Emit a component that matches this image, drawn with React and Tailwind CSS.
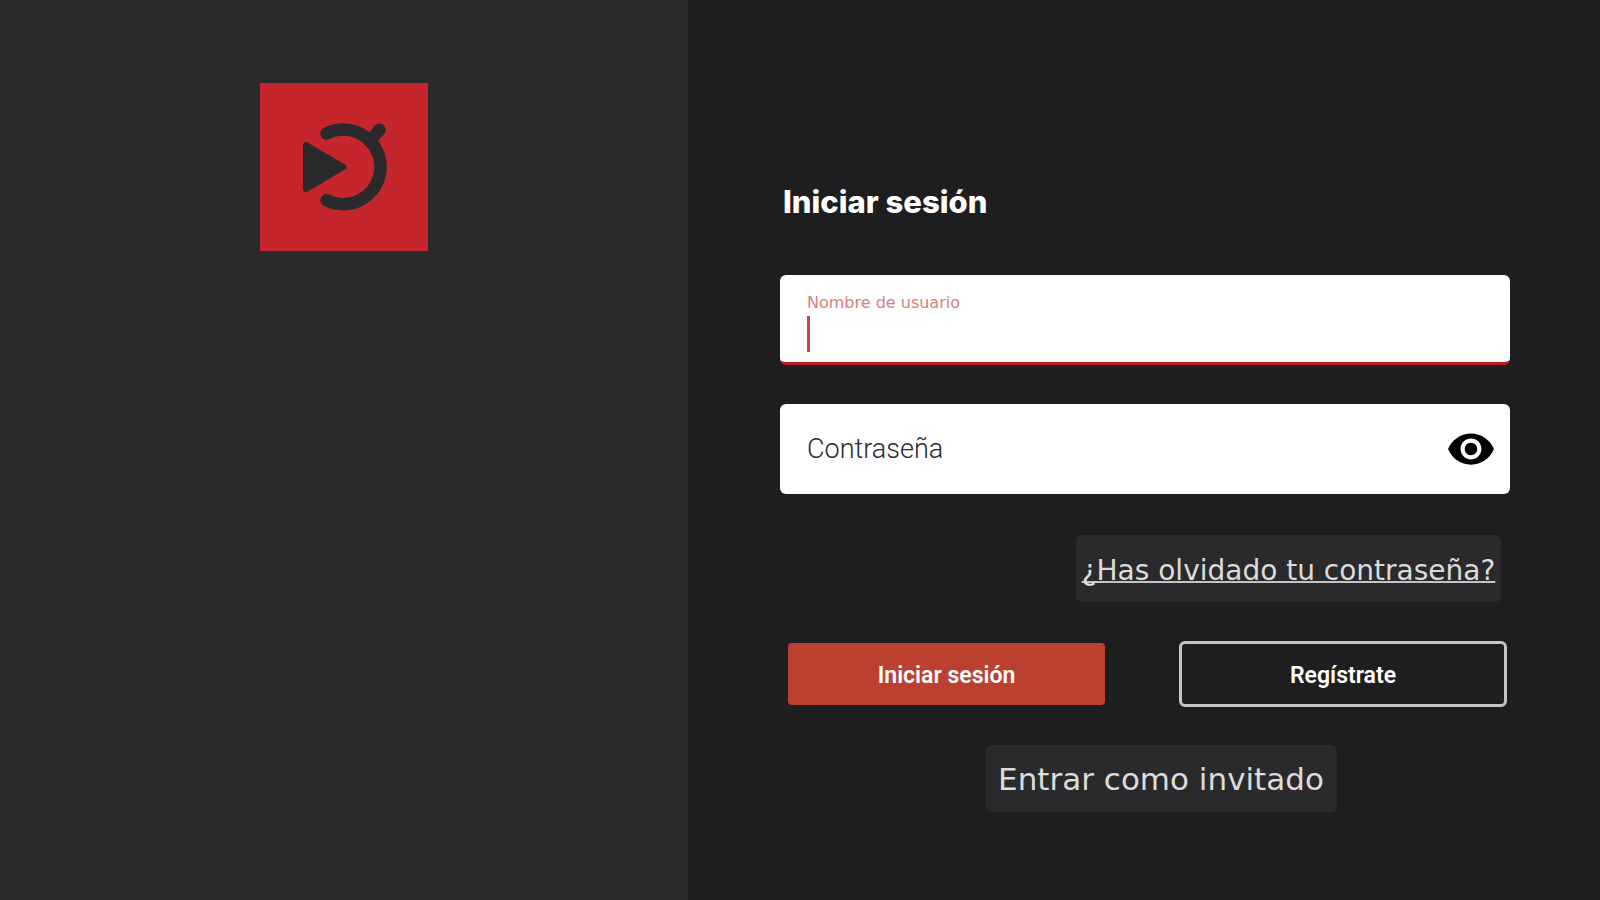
import { MdVisibility } from "react-icons/md";

function Logo() {
  return (
    <svg viewBox="0 0 168 168" className="size-42 bg-[#c5262b]" role="img" aria-label="Logo">
      <g fill="none" stroke="#2a2a2c" strokeWidth="12.5" strokeLinecap="round" strokeLinejoin="round">
        <path d="M66.5 50.5 A37.3 37.3 0 1 1 66.5 117.2" />
        <path d="M119.5 46.8 L110 58" />
      </g>
      <path
        d="M46 62 V106 L83.5 84 Z"
        fill="#2a2a2c"
        stroke="#2a2a2c"
        strokeWidth="6"
        strokeLinejoin="round"
      />
    </svg>
  );
}

export default function App() {
  return (
    <main className="grid min-h-screen grid-cols-[43fr_57fr] bg-[#1e1e20] font-['Roboto',sans-serif] text-white">
      <aside className="flex justify-center bg-[#2a2a2c] pt-[83px]">
        <Logo />
      </aside>

      <form className="flex flex-col pt-[184px] pr-[90px] pl-[92px]" onSubmit={(e) => e.preventDefault()}>
        <h1 className="pl-[3px] font-['Inter',sans-serif] text-[31px] leading-9 font-extrabold">Iniciar sesión</h1>

        <div className="relative mt-[55px] flex h-[90px] flex-col overflow-hidden rounded-md border-b-3 border-[#c01a1e] bg-white px-[27px] pt-[18px]">
          <label htmlFor="user" className="font-['DejaVu_Sans',sans-serif] text-[16px] leading-5 text-[#d77f7f]">
            Nombre de usuario
          </label>
          <input
            id="user"
            type="text"
            autoComplete="off"
            className="mt-1 h-9 w-full text-[27px] text-[#333] caret-transparent outline-none"
          />
          <span aria-hidden="true" className="absolute top-[41px] left-[27px] h-9 w-[3px] bg-[#c5484a]" />
        </div>

        <div className="mt-[39px] flex h-[90px] items-center rounded-md bg-white pr-[14px] pl-[27px]">
          <label htmlFor="password" className="text-[27px] font-light text-[#2a2a2a]">
            Contraseña
          </label>
          <input
            id="password"
            type="password"
            className="ml-3 h-full min-w-0 flex-1 text-[27px] text-[#333] outline-none"
          />
          <button type="button" aria-label="Mostrar contraseña" className="text-black">
            <MdVisibility className="size-[50px]" />
          </button>
        </div>

        <a
          href="#recuperar"
          className="mt-[41px] mr-[9px] flex h-[67px] w-[425px] items-center justify-center self-end rounded-md bg-[#2a2a2c] pt-1 font-['DejaVu_Sans',sans-serif] text-[28px] whitespace-nowrap text-[#dcdcdc] underline decoration-[#c4c4c4] decoration-2 underline-offset-1 [text-decoration-skip-ink:none]"
        >
          ¿Has olvidado tu contraseña?
        </a>

        <div className="mt-[39px] flex items-center justify-between pr-[3px] pl-2">
          <button type="submit" className="h-[62px] w-[317px] rounded-sm bg-[#bc402f] pt-1 text-[23px] font-semibold">
            Iniciar sesión
          </button>
          <button
            type="button"
            className="h-[66px] w-[328px] rounded-md border-3 border-[#c4c4c4] pt-1 text-[23px] font-semibold"
          >
            Regístrate
          </button>
        </div>

        <button
          type="button"
          className="mt-[38px] ml-8 h-[67px] w-[351px] self-center rounded-md bg-[#2a2a2c] pt-0.5 font-['DejaVu_Sans',sans-serif] text-[31px] whitespace-nowrap text-[#dcdcdc]"
        >
          Entrar como invitado
        </button>
      </form>
    </main>
  );
}
